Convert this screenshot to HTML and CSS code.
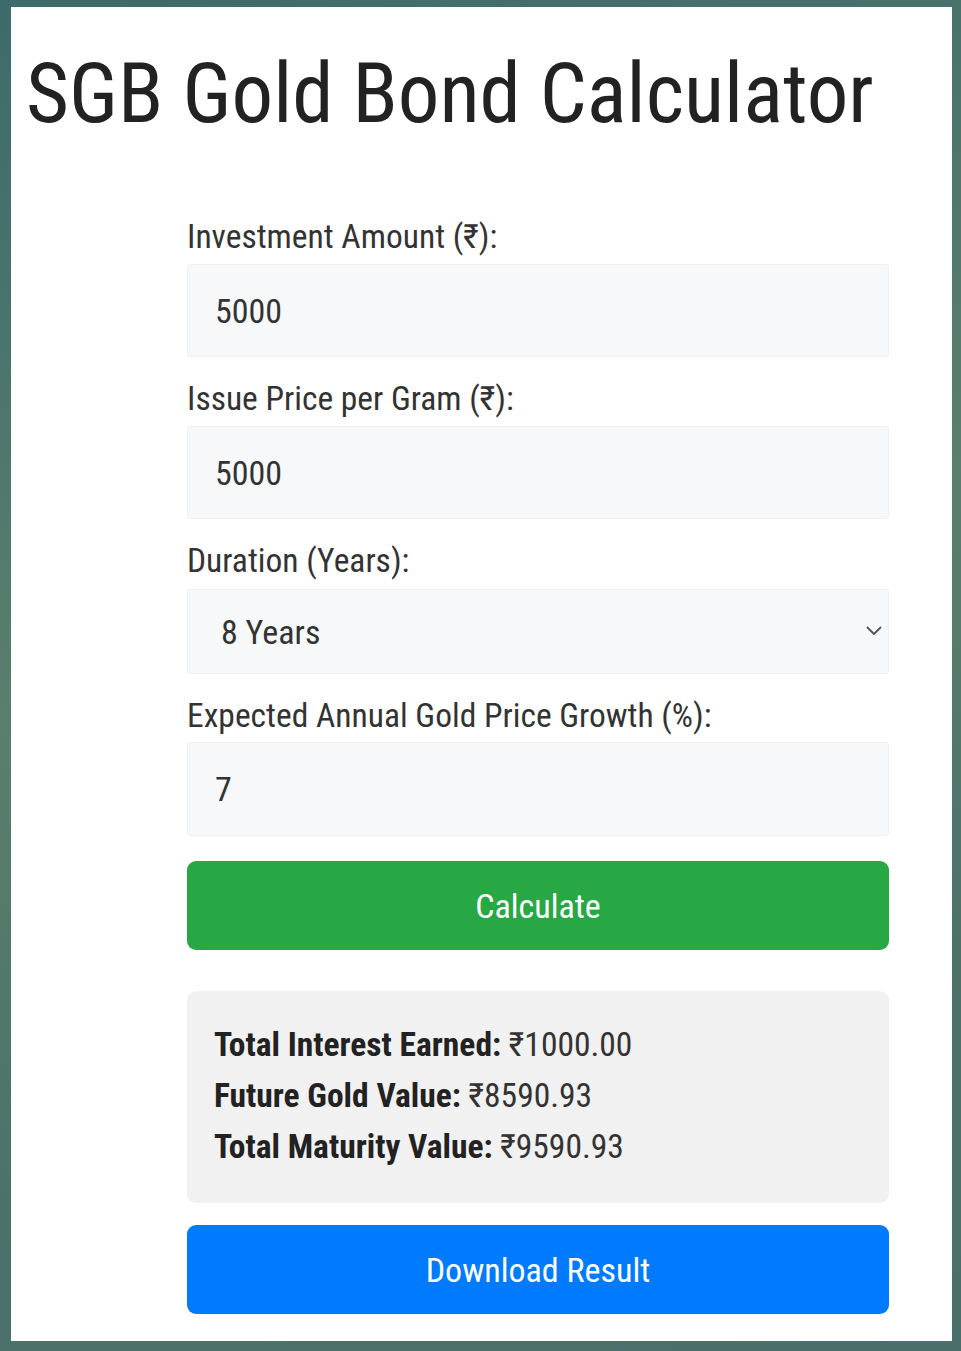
FILE: index.html
```html
<!DOCTYPE html>
<html lang="en">
<head>
<meta charset="utf-8">
<title>SGB Gold Bond Calculator</title>
<link rel="stylesheet" href="styles.css">
</head>
<body>
<main class="page">
  <h1 class="title">SGB Gold Bond Calculator</h1>
  <form class="calc">
    <label class="field-label" for="amount">Investment Amount (₹):</label>
    <input class="field-input" id="amount" type="text" value="5000">

    <label class="field-label" for="price">Issue Price per Gram (₹):</label>
    <input class="field-input" id="price" type="text" value="5000">

    <label class="field-label label-tight" for="years">Duration (Years):</label>
    <div class="select-wrap">
      <select class="field-select" id="years">
        <option>8 Years</option>
      </select>
      <svg class="chevron" width="16" height="10" viewBox="0 0 16 10"><path d="M1.5 1.5 L8 8 L14.5 1.5" fill="none" stroke="#555" stroke-width="1.8" stroke-linecap="round" stroke-linejoin="round"/></svg>
    </div>

    <label class="field-label label-loose" for="growth">Expected Annual Gold Price Growth (%):</label>
    <input class="field-input input-last" id="growth" type="text" value="7">

    <button type="button" class="btn btn-green">Calculate</button>

    <div class="results">
      <p class="result-line"><strong>Total Interest Earned:</strong> ₹1000.00</p>
      <p class="result-line"><strong>Future Gold Value:</strong> ₹8590.93</p>
      <p class="result-line"><strong>Total Maturity Value:</strong> ₹9590.93</p>
    </div>

    <button type="button" class="btn btn-blue">Download Result</button>
  </form>
</main>
</body>
</html>
```

FILE: styles.css
```css
html, body {
  margin: 0;
}
body {
  box-sizing: border-box;
  width: 961px;
  height: 1351px;
  padding: 7px 9px 10px 11px;
  background: linear-gradient(165deg, #3d6a6a 0%, #5a7f6e 45%, #4b7269 75%, #4a6f6a 100%);
  font-family: Roboto, "Liberation Sans", Arial, sans-serif;
  font-stretch: 84%;
  overflow: hidden;
}
.page {
  box-sizing: border-box;
  height: 1334px;
  background: #fff;
  padding: 36px 15px 0 15px;
}
.title {
  margin: 0;
  font-size: 83px;
  font-weight: 400;
  font-stretch: 84%;
  line-height: 101px;
  color: #222;
  white-space: nowrap;
}
.calc {
  display: flex;
  flex-direction: column;
  width: 702px;
  margin: 72px 0 0 161px;
}
.field-label {
  font-size: 33.5px;
  font-stretch: 84%;
  line-height: 38px;
  color: #333;
  padding-top: 2px;
  margin-bottom: 8px;
}
.label-tight {
  margin-bottom: 9px;
}
.label-loose {
  margin-bottom: 7px;
}
.field-input,
.field-select {
  box-sizing: border-box;
  width: 702px;
  height: 93px;
  margin: 0 0 21px 0;
  padding: 0 27px;
  border: 1px solid #f0f1f2;
  border-radius: 3px;
  background: #f7f8f9;
  font-family: inherit;
  font-stretch: 84%;
  font-size: 34px;
  color: #333;
  outline: none;
}
.input-last {
  height: 94px;
  margin-bottom: 25px;
}
.select-wrap {
  position: relative;
  width: 702px;
  height: 85px;
  margin-bottom: 21px;
}
.field-select {
  height: 85px;
  margin: 0;
  padding: 0 30px 0 33px;
  -webkit-appearance: none;
  appearance: none;
}
.chevron {
  position: absolute;
  right: 7px;
  top: 37px;
  width: 16px;
  height: 10px;
  pointer-events: none;
}
.btn {
  box-sizing: border-box;
  width: 702px;
  height: 89px;
  border: none;
  border-radius: 9px;
  color: #fff;
  font-family: inherit;
  font-stretch: 84%;
  font-size: 34px;
  cursor: pointer;
}
.btn-green {
  background: #28a745;
  margin-bottom: 41px;
}
.btn-blue {
  background: #007bff;
}
.results {
  box-sizing: border-box;
  height: 212px;
  margin-bottom: 22px;
  padding: 28px 27px;
  background: #f1f1f1;
  border-radius: 9px;
}
.result-line {
  margin: 0;
  font-size: 33.5px;
  font-stretch: 84%;
  line-height: 51px;
  color: #333;
}
.result-line strong {
  font-weight: 700;
  color: #222;
}
```
